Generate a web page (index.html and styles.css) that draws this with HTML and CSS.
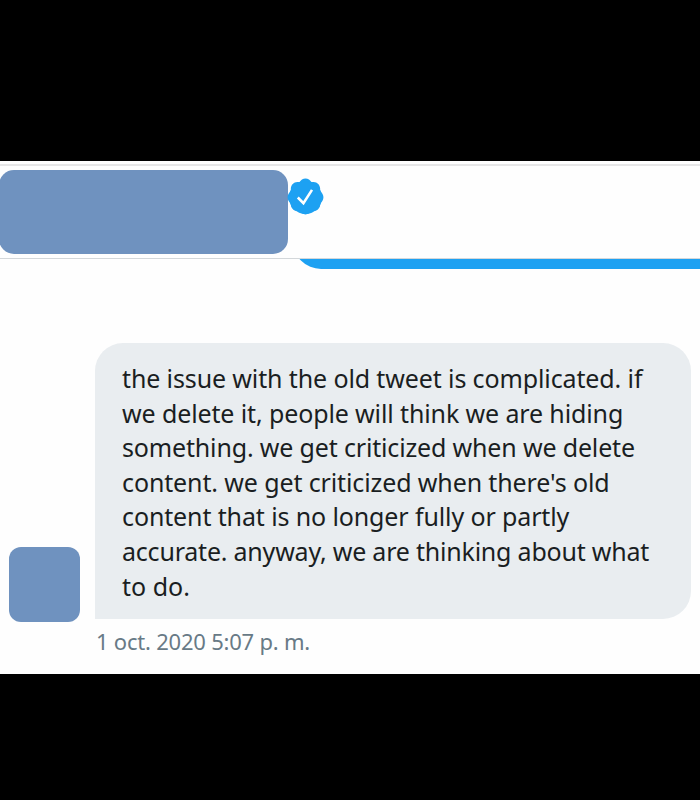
FILE: index.html
```html
<!DOCTYPE html>
<html lang="en">
<head>
    <meta charset="UTF-8">
    <meta name="viewport" content="width=device-width, initial-scale=1.0">
    <title>Messages</title>
    <link rel="stylesheet" href="styles.css">
</head>
<body>
    <main>
        <header>
            <div class="name"></div>
            <svg class="verified" viewBox="0 0 24 24">
                <circle fill="#1da1f2" cx="12" cy="12.5" r="9.7"/>
                <path fill="#1da1f2" d="M22.5 12.5c0-1.58-.875-2.95-2.148-3.6.154-.435.238-.905.238-1.4 0-2.21-1.71-3.998-3.818-3.998-.47 0-.92.084-1.336.25C14.818 2.415 13.51 1.5 12 1.5s-2.816.917-3.437 2.25c-.415-.165-.866-.25-1.336-.25-2.11 0-3.818 1.79-3.818 4 0 .494.083.964.237 1.4-1.272.65-2.147 2.018-2.147 3.6 0 1.495.782 2.798 1.942 3.486-.02.17-.032.34-.032.514 0 2.21 1.708 4 3.818 4 .47 0 .92-.086 1.335-.25.62 1.334 1.926 2.25 3.437 2.25 1.512 0 2.818-.916 3.437-2.25.415.163.865.248 1.336.248 2.11 0 3.818-1.79 3.818-4 0-.174-.012-.344-.033-.513 1.158-.687 1.943-1.99 1.943-3.484z"/>
                <path fill="none" stroke="#fff" stroke-width="1.5" d="M7.5 12.6l3.3 3.3 5-7.8"/>
            </svg>
        </header>
        <div class="sent"><div class="sent-bubble"></div></div>
        <section>
            <div class="avatar"></div>
            <p class="bubble">
                <span class="l1">the issue with the old tweet is complicated. if</span>
                <span class="l2">we delete it, people will think we are hiding</span>
                <span class="l3">something. we get criticized when we delete</span>
                <span class="l4">content. we get criticized when there's old</span>
                <span class="l5">content that is no longer fully or partly</span>
                <span class="l6">accurate. anyway, we are thinking about what</span>
                <span class="l7">to do.</span>
            </p>
        </section>
        <time>1 oct. 2020 5:07 p. m.</time>
    </main>
</body>
</html>
```

FILE: styles.css
```css
* {
    box-sizing: border-box;
}

body {
    margin: 0;
    padding-top: 161px;
    height: 800px;
    background-color: #000;
    font-family: "Noto Sans", "Open Sans", sans-serif;
    overflow: hidden;
}

main {
    height: 513px;
    padding-top: 3px;
    background-color: #fefefe;
}

header {
    display: flex;
    height: 95px;
    border-top: 2px solid #e6e6e7;
    border-bottom: 1px solid #d3d7da;
}

.name {
    width: 289px;
    height: 84px;
    margin: 4px 0 0 -1px;
    border-radius: 15px;
    background-color: #6f92bf;
}

.verified {
    width: 41px;
    height: 41px;
    margin: 10px 0 0 -3px;
}

/* bottom edge of the previous message */
.sent {
    display: flex;
    align-items: flex-end;
    height: 10px;
    padding-left: 293px;
    overflow: hidden;
}

.sent-bubble {
    flex: 1;
    height: 60px;
    background-color: #1da1f2;
    border-bottom-left-radius: 28px;
}

section {
    display: flex;
    align-items: flex-end;
    margin-top: 74px;
    padding-left: 9px;
}

.avatar {
    width: 71px;
    height: 75px;
    margin: 0 15px -3px 0;
    border-radius: 12px;
    background-color: #6f92bf;
}

.bubble {
    width: 596px;
    height: 276px;
    margin: 0;
    padding: 18px 0 0 27px;
    border-radius: 28px 28px 28px 0;
    background-color: #e9edf0;
    color: #1a1e22;
    font-size: 25px;
    line-height: 34.6px;
    letter-spacing: -0.12px;
    white-space: nowrap;
}

.bubble span {
    display: block;
}

.bubble .l3 {
    letter-spacing: -0.16px;
}

.bubble .l6 {
    letter-spacing: -0.21px;
}

.bubble .l7 {
    letter-spacing: 0;
}

time {
    display: block;
    margin: 6px 0 0 96px;
    color: #687a86;
    font-size: 22px;
    line-height: 32px;
    letter-spacing: -0.22px;
}
```
